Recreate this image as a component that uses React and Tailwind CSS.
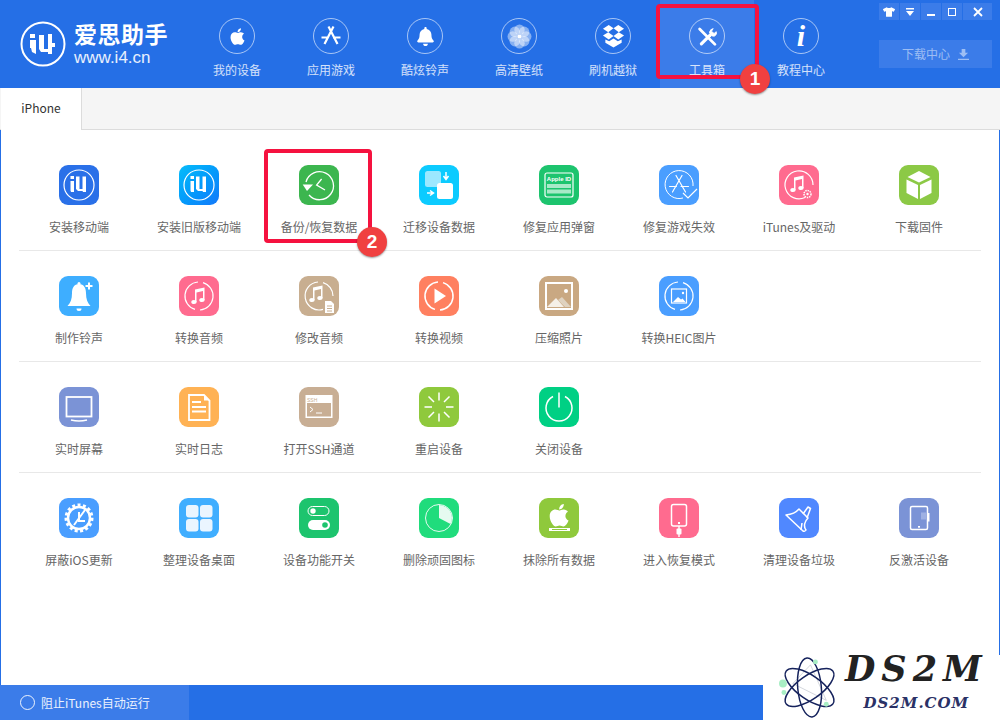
import React from 'react';
import { FaApple, FaBell, FaTshirt } from 'react-icons/fa';

const CJK = '"Noto Sans CJK SC", "Liberation Sans", sans-serif';

/* shared bits of icon drawing, all in a 40x40 box */
const AppA = ({ w = 1.6 }) => (
  <g stroke="#fff" strokeWidth={w} strokeLinecap="round" fill="none">
    <path d="M17 10.500 26.500 27M23 10.500 13.500 27M10.500 21.500h7M22 21.500h7.500" />
  </g>
);

const Note = ({ x = 0, y = 0, s = 1 }) => (
  <g transform={`translate(${x} ${y}) scale(${s})`} fill="#fff">
    <path d="M16 13.500 25.500 11.500V24h-1.500V15l-6.500 1.400V26h-1.500z" />
    <ellipse cx="15" cy="26" rx="2.700" ry="2.100" />
    <ellipse cx="23" cy="24" rx="2.700" ry="2.100" />
  </g>
);

const I4Mark = () => (
  <g>
    <circle cx="20" cy="20" r="15" fill="none" stroke="#fff" strokeWidth="1.200" />
    <path d="M11.500 14h3.500v-3h-3.500zM11.500 16h3.500v11h-3l-.5-1.500zM17 11.500h3.500V24h3V11.500H27V27h-3l-.5-1H19l-2-2z" fill="#fff" />
  </g>
);

const tools = [
  [
    { label: '安装移动端', bg: 'bg-[#2a70e8]', icon: <I4Mark /> },
    { label: '安装旧版移动端', bg: 'bg-gradient-to-br from-[#0abcfa] to-[#1478fa]', icon: <I4Mark /> },
    {
      label: '备份/恢复数据',
      bg: 'bg-[#3cb64f]',
      icon: (
        <g fill="none" stroke="#fff">
          <path d="M7 17A14 14 0 1 1 10 30" strokeWidth="1.300" />
          <path d="M3.700 19.500H14L8 26z" fill="#fff" stroke="none" />
          <path d="M22.600 14 17.600 20 26 25" strokeWidth="1.300" />
        </g>
      ),
    },
    {
      label: '迁移设备数据',
      bg: 'bg-[#0ccbff]',
      icon: (
        <g>
          <rect x="6" y="6" width="16" height="16" rx="2.500" fill="#9ce8ff" />
          <rect x="18" y="18" width="16" height="16" rx="2.500" fill="#fff" />
          <path d="M27 7v6M24.500 11l2.500 3.500 2.500-3.500M8 28h6M11 25.500l3.500 2.500-3.500 2.500" stroke="#fff" strokeWidth="1.500" fill="none" />
        </g>
      ),
    },
    {
      label: '修复应用弹窗',
      bg: 'bg-[#1dc46e]',
      icon: (
        <g>
          <rect x="6" y="8" width="28" height="24" rx="2" fill="none" stroke="#fff" strokeWidth="1.200" />
          <text x="20" y="16" textAnchor="middle" fontSize="6" fontWeight="700" fill="#fff" fontFamily="Liberation Sans, sans-serif">Apple ID</text>
          <rect x="8" y="19" width="24" height="4" fill="#a9e9c8" />
          <rect x="8" y="24.500" width="24" height="4" fill="#a9e9c8" />
        </g>
      ),
    },
    {
      label: '修复游戏失效',
      bg: 'bg-[#4a9eff]',
      icon: (
        <g>
          <path d="M24 33A14 14 0 1 1 34 21" fill="none" stroke="#fff" strokeWidth="1" />
          <AppA w={1.200} />
          <path d="M24 28l5 5 9-9" fill="none" stroke="#fff" strokeWidth="1.200" />
        </g>
      ),
    },
    {
      label: 'iTunes及驱动',
      bg: 'bg-[#ff6b8f]',
      icon: (
        <g>
          <path d="M26 32.500A14 14 0 1 1 34 20" fill="none" stroke="#fff" strokeWidth="1.200" />
          <Note x="-1" y="-1" />
          <circle cx="28.500" cy="29" r="3.500" fill="none" stroke="#fff" strokeWidth="1.500" strokeDasharray="1.500 .8" />
          <circle cx="28.500" cy="29" r="1.200" fill="#fff" />
        </g>
      ),
    },
    {
      label: '下载固件',
      bg: 'bg-[#8cc946]',
      icon: (
        <g fill="#fff">
          <path d="M20 6 31.500 12 20 17.500 8.500 12z" />
          <path d="M7.500 14.500 19 20v14L7.500 28z" />
          <path d="M32.500 14.500 21 20v14l11.500-6z" />
        </g>
      ),
    },
  ],
  [
    {
      label: '制作铃声',
      bg: 'bg-[#3eaeff]',
      icon: (
        <g fill="#fff">
          <path d="M20 8c-5 0-7 4-7 9 0 6-1.500 10-4.500 13h23c-3-3-4.500-7-4.500-13 0-5-2-9-7-9z" />
          <circle cx="20" cy="7.500" r="1.500" />
          <path d="M17.500 32.500h5a2.500 2.500 0 0 1-5 0z" />
          <path d="M29 6.500h2v2.500h2.500v2H31v2.500h-2V11h-2.500V9H29z" />
        </g>
      ),
    },
    {
      label: '转换音频',
      bg: 'bg-[#ff6b8f]',
      icon: (
        <g>
          <path d="M24 6.600A14 14 0 0 1 21 34M16 33.400A14 14 0 0 1 19 6" fill="none" stroke="#fff" strokeWidth="1.200" />
          <Note />
        </g>
      ),
    },
    {
      label: '修改音频',
      bg: 'bg-[#c8ae90]',
      icon: (
        <g>
          <path d="M24 6.600A14 14 0 0 1 34 20M24 33.400A14 14 0 1 1 19 6" fill="none" stroke="#fff" strokeWidth="1.200" />
          <Note x="-2" y="-2" />
          <path d="M26 25h6l3 3v9h-9z" fill="#fff" />
          <path d="M28 30h5M28 32.500h5M28 35h5" stroke="#c8ae90" strokeWidth="1" />
        </g>
      ),
    },
    {
      label: '转换视频',
      bg: 'bg-[#ff8060]',
      icon: (
        <g>
          <path d="M24 6.600A14 14 0 0 1 21 34M16 33.400A14 14 0 0 1 19 6" fill="none" stroke="#fff" strokeWidth="1.500" />
          <path d="M15.500 12.500 27 20l-11.500 7.500z" fill="#fff" />
        </g>
      ),
    },
    {
      label: '压缩照片',
      bg: 'bg-[#c9a882]',
      icon: (
        <g>
          <rect x="7" y="7" width="26" height="26" fill="none" stroke="#fff" strokeWidth="2" />
          <circle cx="27" cy="15" r="2" fill="#fff" />
          <path d="M8 31l9-9 8 9z" fill="#f5f0e8" />
          <path d="M19 24l4-3 9 10h-6z" fill="#dfd2c0" />
        </g>
      ),
    },
    {
      label: '转换HEIC图片',
      bg: 'bg-[#4a9eff]',
      icon: (
        <g>
          <path d="M24 6.600A14 14 0 0 1 21 34M16 33.400A14 14 0 0 1 19 6" fill="none" stroke="#fff" strokeWidth="1.200" />
          <rect x="12.500" y="13" width="15" height="14" fill="none" stroke="#fff" strokeWidth="1.200" />
          <path d="M14 26l5-5 3 2.500 1.500-1 3 3.500z" fill="#fff" />
          <circle cx="24" cy="17" r="1.200" fill="#fff" />
        </g>
      ),
    },
  ],
  [
    {
      label: '实时屏幕',
      bg: 'bg-[#7b93d6]',
      icon: (
        <g fill="none" stroke="#fff">
          <rect x="7.500" y="10" width="25" height="19.500" strokeWidth="1.800" />
          <path d="M12 33c5 1.200 11 1.200 16 0" strokeWidth="1.500" />
        </g>
      ),
    },
    {
      label: '实时日志',
      bg: 'bg-[#ffb254]',
      icon: (
        <g>
          <path d="M10 8h15l5.500 5.500V33H10z" fill="none" stroke="#fff" strokeWidth="1.800" />
          <path d="M25 8l5.500 5.500H25z" fill="#fff" />
          <path d="M13 15h9M13 20h14M13 24.500h14" stroke="#fff" strokeWidth="1.800" />
        </g>
      ),
    },
    {
      label: '打开SSH通道',
      bg: 'bg-[#c8ae94]',
      icon: (
        <g>
          <rect x="6.500" y="8" width="27" height="23" fill="#fff" />
          <rect x="8" y="16" width="24" height="13.500" fill="#c8ae94" />
          <text x="8" y="14.500" fontSize="5" fill="#c8ae94" fontFamily="Liberation Sans, sans-serif">SSH</text>
          <path d="M11 20l3 2.500-3 2.500M17 26h6" fill="none" stroke="#fff" strokeWidth="1" />
        </g>
      ),
    },
    {
      label: '重启设备',
      bg: 'bg-[#8fc93c]',
      icon: (
        <g stroke="#fff" strokeWidth="1.500">
          <path d="M20 5.500v8M20 26.500v8M5.500 20h7.500M27 20h7.500M9.500 9.500l5.500 5.500M25 25l5.500 5.500M30.500 9.500 25 15M15 25l-5.500 5.500" />
        </g>
      ),
    },
    {
      label: '关闭设备',
      bg: 'bg-[#00d084]',
      icon: (
        <g fill="none" stroke="#fff" strokeWidth="1.500">
          <path d="M14 9.500a13 13 0 1 0 12 0" />
          <path d="M20 5.500v15" />
        </g>
      ),
    },
  ],
  [
    {
      label: '屏蔽iOS更新',
      bg: 'bg-[#4a9eff]',
      icon: (
        <g fill="none" stroke="#fff">
          <circle cx="20" cy="20" r="11" strokeWidth="2.500" />
          <circle cx="20" cy="20" r="13" strokeWidth="3" strokeDasharray="3 2.400" />
          <path d="M26 12 15 27M20 14v9h6" strokeWidth="2" />
        </g>
      ),
    },
    {
      label: '整理设备桌面',
      bg: 'bg-[#40aeff]',
      icon: (
        <g fill="#eaf5ff">
          <rect x="7" y="7" width="12.500" height="12.500" rx="3" />
          <rect x="21" y="7" width="12.500" height="12.500" rx="3" />
          <rect x="7" y="21" width="12.500" height="12.500" rx="3" />
          <rect x="21" y="21" width="12.500" height="12.500" rx="3" />
        </g>
      ),
    },
    {
      label: '设备功能开关',
      bg: 'bg-[#1dc46e]',
      icon: (
        <g>
          <rect x="9" y="8.500" width="21" height="9" rx="4.500" fill="none" stroke="#fff" strokeWidth="1" />
          <circle cx="14" cy="13" r="2.700" fill="#fff" />
          <rect x="9" y="22" width="22" height="10" rx="5" fill="#fff" />
          <circle cx="26" cy="27" r="2.800" fill="#1dc46e" />
        </g>
      ),
    },
    {
      label: '删除顽固图标',
      bg: 'bg-[#20dc7c]',
      icon: (
        <g>
          <circle cx="20" cy="20" r="13.500" fill="none" stroke="#e6faf0" strokeWidth="1" />
          <path d="M20 7a13 13 0 0 1 11.500 19L20 20z" fill="#e6faf0" />
        </g>
      ),
    },
    {
      label: '抹除所有数据',
      bg: 'bg-[#8fc93c]',
      icon: (
        <g>
          <g transform="translate(10.500 4.500) scale(.05)" fill="#fff">
            <path d="M318.700 268.700c-.2-36.700 16.400-64.400 50-84.800-18.800-26.900-47.200-41.700-84.700-44.600-35.500-2.800-74.300 20.700-88.500 20.700-15 0-49.400-19.700-76.400-19.700C63.300 141.200 4 184.800 4 273.500q0 39.300 14.400 81.200c12.800 36.700 59 126.700 107.200 125.200 25.200-.6 43-17.900 75.800-17.900 31.800 0 48.300 17.900 76.400 17.900 48.600-.7 90.400-82.500 102.600-119.300-65.200-30.700-61.700-90-61.700-91.900zm-56.600-164.200c27.300-32.400 24.800-61.900 24-72.500-24.100 1.400-52 16.400-67.900 34.900-17.500 19.800-27.800 44.300-25.600 71.900 26.100 2 49.900-11.400 69.500-34.300z" />
          </g>
          <rect x="10" y="30" width="21" height="3" fill="#fff" />
          <rect x="13" y="31" width="15" height="1" fill="#8fc93c" />
        </g>
      ),
    },
    {
      label: '进入恢复模式',
      bg: 'bg-[#ff6b8f]',
      icon: (
        <g fill="#fff">
          <rect x="12.500" y="6.500" width="15" height="21.500" rx="2" fill="none" stroke="#fff" strokeWidth="1.500" />
          <rect x="19" y="24" width="2" height="2" />
          <rect x="17.500" y="30.500" width="5" height="6" rx="1" />
          <rect x="19.300" y="28" width="1.400" height="11" />
        </g>
      ),
    },
    {
      label: '清理设备垃圾',
      bg: 'bg-[#5088ff]',
      icon: (
        <g fill="none" stroke="#fff" strokeWidth="1.500" strokeLinejoin="round">
          <path d="M7 17c5-.5 10-2.500 13-6l9 9c-3 3-5 8-2 12-.5 1-2 1.500-3 1L7 17z" />
          <path d="M24 16l5-7 2.500 1.500L28 20M22 32l1-7" />
        </g>
      ),
    },
    {
      label: '反激活设备',
      bg: 'bg-[#7b93d6]',
      icon: (
        <g>
          <rect x="11.500" y="8.500" width="17" height="23" rx="1.500" fill="none" stroke="#fff" strokeWidth="1.500" />
          <rect x="28" y="15" width="2.500" height="8.500" fill="#fff" />
          <rect x="19" y="28" width="2" height="1.700" fill="#fff" />
          <rect x="22" y="14.500" width="5" height="7" fill="#9fb1e3" />
        </g>
      ),
    },
  ],
];

const navItems = [
  { label: '我的设备', icon: <FaApple className="h-[19px] w-[19px]" /> },
  {
    label: '应用游戏',
    icon: (
      <svg viewBox="0 0 24 24" className="h-6 w-6" fill="none" stroke="#fff" strokeWidth="2.200">
        <path d="M9.500 2.500 18.500 20M14.500 2.500 5.500 20M2.500 13.500h7M14 13.500h7.500" />
      </svg>
    ),
  },
  { label: '酷炫铃声', icon: <FaBell className="h-[19px] w-[19px]" /> },
  {
    label: '高清壁纸',
    icon: (
      <svg viewBox="0 0 24 24" className="h-[25px] w-[25px]" fill="#fff">
        <g fillOpacity=".45">
          <circle cx="12" cy="5.500" r="5" />
          <circle cx="12" cy="18.500" r="5" />
          <circle cx="5.500" cy="12" r="5" />
          <circle cx="18.500" cy="12" r="5" />
          <circle cx="7.500" cy="7.500" r="5" />
          <circle cx="16.500" cy="7.500" r="5" />
          <circle cx="7.500" cy="16.500" r="5" />
          <circle cx="16.500" cy="16.500" r="5" />
        </g>
        <circle cx="12" cy="12" r="2" />
      </svg>
    ),
  },
  {
    label: '刷机越狱',
    icon: (
      <svg viewBox="0 0 24 24" className="h-[23px] w-[23px]" fill="#fff">
        <path d="M7 0 12 3.500 6.500 7.500 1 4zM17 0 23 4 17.500 7.500 12 3.500zM1 11 6.500 7.500 12 11.500 7 15zM23 11 17.500 7.500 12 11.500 17 15zM3.500 15 7.500 17 12 14 16.500 17 20.500 15V18.500L12 23.500 3.500 18.500z" />
      </svg>
    ),
  },
  {
    label: '工具箱',
    active: true,
    icon: (
      <svg viewBox="0 0 24 24" className="h-[21px] w-[21px]" fill="none" stroke="#fff" strokeLinecap="round">
        <path d="M3 3.500 20.500 21" strokeWidth="3.200" />
        <path d="M5 20.500 15 10.500" strokeWidth="3.600" />
        <path d="M14.500 7a4.500 4.500 0 0 0 5.500 4.500 4 4 0 0 0 2-5l-2.500 2-3-2.500 2-3a4.500 4.500 0 0 0-4 4z" fill="#fff" strokeWidth="1" />
      </svg>
    ),
  },
  {
    label: '教程中心',
    icon: (
      <span className="text-[30px] font-bold italic leading-none [font-family:'Liberation_Serif',serif]">i</span>
    ),
  },
];

const NavItem = ({ label, icon, active }) => (
  <div className={`flex w-[94px] flex-col items-center pt-[18px] ${active ? 'bg-[#3b7ce9]' : ''}`}>
    <div className="flex h-9 w-9 items-center justify-center rounded-full border border-white/60 text-white">
      {icon}
    </div>
    <div className="mt-[6px] text-xs leading-5 text-white/80">{label}</div>
  </div>
);

const ToolItem = ({ label, bg, icon }) => (
  <div className="flex w-[120px] flex-col items-center">
    <div className={`h-10 w-10 overflow-hidden rounded-[9px] ${bg}`}>
      <svg viewBox="0 0 40 40" className="h-10 w-10">{icon}</svg>
    </div>
    <div className="mt-3 whitespace-nowrap text-xs leading-5 text-[#666]">{label}</div>
  </div>
);

const Badge = ({ n, className }) => (
  <div
    className={`absolute flex h-[30px] w-[30px] items-center justify-center rounded-full bg-[#f04040] text-[19px] font-bold text-white shadow-[0_1px_2px_rgba(0,0,0,0.4)] [font-family:'Liberation_Sans',sans-serif] ${className}`}
  >
    {n}
  </div>
);

const WinButton = ({ className, children }) => (
  <div className={`flex h-[17px] items-center justify-center bg-[#3b7ce9] text-white ${className}`}>{children}</div>
);

export default function App() {
  return (
    <div
      className="relative flex h-[720px] w-[1000px] flex-col overflow-hidden bg-white"
      style={{ fontFamily: CJK }}
    >
      {/* Header */}
      <div className="relative flex h-[88px] shrink-0 bg-[#256fe6]">
        <div className="flex w-[190px] items-center py-[6px] pl-5 text-white">
          <svg viewBox="0 0 46 46" className="h-[46px] w-[46px] shrink-0">
            <circle cx="23" cy="23" r="21.500" fill="none" stroke="#fff" strokeWidth="2" />
            <path d="M10 13h5v4h-5zM10 19h6v14l-4-2-1-4h-1zM19 14h5v14h4V13h4v9h3v4h-3v7h-4v-2h-7l-2-3z" fill="#fff" />
          </svg>
          <div className="ml-2">
            <div className="text-[23px] font-bold leading-[22px] tracking-[0.5px]">爱思助手</div>
            <div className="mt-[6px] text-[17px] leading-[16px] text-white/90 [font-family:'Liberation_Sans',sans-serif]">www.i4.cn</div>
          </div>
        </div>
        {navItems.map((item) => (
          <NavItem key={item.label} {...item} />
        ))}
        <div className="ml-auto flex w-[121px] flex-col pr-[8px] pt-[3px]">
          <div className="flex gap-px">
            <WinButton className="w-5"><FaTshirt className="h-3 w-3" /></WinButton>
            <WinButton className="w-5">
              <svg viewBox="0 0 10 10" className="h-[10px] w-[10px]" fill="#fff"><path d="M1 1h8v1.500H1zM1 4h8L5 9z" /></svg>
            </WinButton>
            <WinButton className="w-5"><div className="mt-[6px] h-[2px] w-2 bg-white" /></WinButton>
            <WinButton className="w-5"><div className="h-2 w-2 border-[1.500px] border-white" /></WinButton>
            <WinButton className="w-[29px]">
              <svg viewBox="0 0 10 10" className="h-[10px] w-[10px]" stroke="#fff" strokeWidth="1.800"><path d="M1 1l8 8M9 1l-8 8" /></svg>
            </WinButton>
          </div>
          <div className="mt-[20px] flex h-7 items-center justify-center gap-2 bg-[#3b7ce9] text-xs text-white/50">
            下载中心
            <svg viewBox="0 0 12 12" className="h-[11px] w-[11px]" fill="currentColor"><path d="M4 0h4v4h3L6 9 1 4h3zM0 10.500h12V12H0z" /></svg>
          </div>
        </div>
      </div>

      {/* Tab bar */}
      <div className="flex h-[42px] shrink-0 border-b border-[#dcdcdc] bg-[#f5f5f5] pl-px">
        <div className="-mb-px flex w-[81px] items-center justify-center border-r border-[#dcdcdc] bg-white pb-[3px] text-xs text-[#333]">iPhone</div>
      </div>

      {/* Tool grid */}
      <div className="flex-1 border-x border-[#256fe6] px-[18px] pt-[10px]">
        {tools.map((row, i) => (
          <div key={i} className={`flex h-[111px] pt-[25px] ${i < 3 ? 'border-b border-[#e8e8e8]' : ''}`}>
            {row.map((t) => (
              <ToolItem key={t.label} {...t} />
            ))}
          </div>
        ))}
      </div>

      {/* Status bar */}
      <div className="flex h-[35px] shrink-0 bg-[#256fe6]">
        <div className="flex w-[189px] items-center gap-[6px] bg-[#3b7ce9] pl-5 text-xs text-white/90">
          <div className="h-[15px] w-[15px] rounded-full border border-white/90" />
          阻止iTunes自动运行
        </div>
      </div>

      {/* Tutorial annotations */}
      <div className="absolute left-[656px] top-[4px] h-[75px] w-[103px] rounded-[4px] border-4 border-[#f5123f]" />
      <Badge n="1" className="left-[740px] top-[64px]" />
      <div className="absolute left-[264px] top-[149px] h-[94px] w-[108px] rounded-[4px] border-4 border-[#f5123f]" />
      <Badge n="2" className="left-[357px] top-[227px]" />

      {/* Watermark */}
      <div className="absolute bottom-0 right-0 flex h-[65px] w-[237px] bg-white pl-[16px]">
        <svg viewBox="0 0 66 66" className="h-[65px] w-[65px] shrink-0" fill="none">
          <path d="M14 29 32 10 48 46z" stroke="#c8ccd4" strokeWidth=".8" />
          <ellipse cx="31" cy="33" rx="29" ry="12" stroke="#15225c" strokeWidth="1.500" transform="rotate(35 31 33)" />
          <ellipse cx="31" cy="33" rx="29" ry="12" stroke="#15225c" strokeWidth="1.500" transform="rotate(-35 31 33)" />
          <ellipse cx="31" cy="33" rx="30" ry="12" stroke="#15225c" strokeWidth="1.500" transform="rotate(85 31 33)" />
          <circle cx="4" cy="29" r="4" fill="#a8eec4" />
          <circle cx="37" cy="7" r="2.500" fill="#a8eec4" />
          <circle cx="5" cy="38" r="2.500" fill="#a8eec4" />
          <circle cx="48" cy="50" r="2.500" fill="#a8eec4" />
        </svg>
        <div className="ml-[1px] flex flex-col items-center [font-family:'DejaVu_Serif',serif]">
          <div className="text-[35px] font-bold italic leading-[28px] tracking-[6px] text-[#222]">DS2M</div>
          <div className="mt-[10px] text-[15px] font-bold italic leading-5 tracking-[1px] text-[#2a3166]">DS2M.COM</div>
        </div>
      </div>
    </div>
  );
}
